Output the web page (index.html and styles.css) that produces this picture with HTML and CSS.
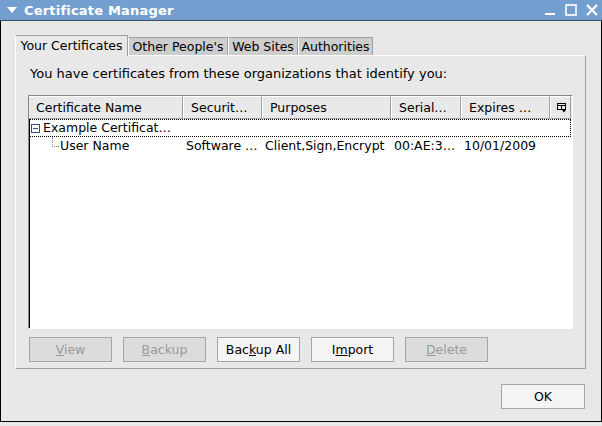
FILE: index.html
```html
<!DOCTYPE html>
<html lang="en">
<head>
    <meta charset="UTF-8">
    <title>Certificate Manager</title>
    <link rel="stylesheet" href="styles.css">
</head>
<body>
    <div class="window">
        <div class="titlebar">
            <svg class="menu-arrow" width="12" height="8" viewBox="0 0 12 8"><polygon points="1,1 11,1 6,7" fill="#fff"/></svg>
            <span class="title">Certificate Manager</span>
            <div class="controls">
                <svg width="12" height="12" viewBox="0 0 12 12"><rect x="1" y="9" width="10" height="2" fill="#fff"/></svg>
                <svg width="12" height="12" viewBox="0 0 12 12"><rect x="1" y="1" width="10" height="10" fill="none" stroke="#fff" stroke-width="1.6"/></svg>
                <svg width="12" height="12" viewBox="0 0 12 12"><path d="M1 1 L11 11 M11 1 L1 11" stroke="#fff" stroke-width="2.2"/></svg>
            </div>
        </div>

        <div class="content">
            <div class="tabs">
                <div class="tab active t-yours">Your Certificates</div>
                <div class="tab t-people">Other People's</div>
                <div class="tab t-sites">Web Sites</div>
                <div class="tab t-auth">Authorities</div>
            </div>
            <div class="panel">
                <p class="intro">You have certificates from these organizations that identify you:</p>
                <div class="tree">
                    <div class="tree-head">
                        <div class="col c-name">Certificate Name</div>
                        <div class="col c-sec">Securit…</div>
                        <div class="col c-purp">Purposes</div>
                        <div class="col c-serial">Serial…</div>
                        <div class="col c-exp">Expires …</div>
                        <div class="col c-pick">
                            <svg width="10" height="10" viewBox="0 0 10 10"><rect x="0.5" y="0.5" width="8" height="6" fill="none" stroke="#000"/><line x1="0.5" y1="2.5" x2="8.5" y2="2.5" stroke="#000"/><line x1="4.5" y1="2.5" x2="4.5" y2="6.5" stroke="#000"/><polygon points="5,7 9,7 7,9.5" fill="#000"/></svg>
                        </div>
                    </div>
                    <div class="row group focused">
                        <span class="expander"></span>Example Certificat…
                    </div>
                    <div class="row">
                        <div class="cell c-name"><span class="branch"></span>User Name</div>
                        <div class="cell c-sec">Software …</div>
                        <div class="cell c-purp">Client,Sign,Encrypt</div>
                        <div class="cell c-serial">00:AE:3…</div>
                        <div class="cell c-exp">10/01/2009</div>
                    </div>
                </div>
                <div class="actions">
                    <button class="btn" disabled><u>V</u>iew</button>
                    <button class="btn" disabled><u>B</u>ackup</button>
                    <button class="btn">Bac<u>k</u>up All</button>
                    <button class="btn">I<u>m</u>port</button>
                    <button class="btn" disabled><u>D</u>elete</button>
                </div>
            </div>
            <div class="footer">
                <button class="btn">OK</button>
            </div>
        </div>
    </div>
</body>
</html>
```

FILE: styles.css
```css
body {
    margin: 0;
    padding: 0;
    font-family: "DejaVu Sans", sans-serif;
    font-size: 12.5px;
    background-color: #e8e8e8;
    color: #000;
}
.window {
    width: 602px;
    height: 422px;
    box-sizing: border-box;
    border-left: 1px solid #000;
    border-right: 1px solid #000;
    border-bottom: 1px solid #000;
    display: flex;
    flex-direction: column;
}
.titlebar {
    height: 20px;
    margin: 0 -1px;
    background-color: #729fcf;
    border-bottom: 1px solid #3b4f66;
    display: flex;
    align-items: center;
    color: #fff;
    flex-shrink: 0;
}
.menu-arrow {
    margin: 0 6px 0 6px;
}
.title {
    font-weight: bold;
    font-size: 13px;
    letter-spacing: 0.2px;
}
.controls {
    margin-left: auto;
    margin-right: 4px;
    display: flex;
    gap: 9px;
}
.content {
    flex: 1;
    padding: 14px 15px 0 14px;
    display: flex;
    flex-direction: column;
}
.tabs {
    display: flex;
    align-items: flex-end;
    height: 20px;
}
.tab {
    height: 18px;
    line-height: 18px;
    padding: 0;
    text-align: center;
    white-space: nowrap;
    background-color: #cdcdcd;
    border: 1px solid #a0a0a0;
    border-bottom: none;
    border-left-color: #fff;
    box-sizing: border-box;
}
.tab.active {
    height: 21px;
    line-height: 20px;
    background-color: #e8e8e8;
    position: relative;
    top: 1px;
}
.t-yours { width: 113px; }
.t-people { width: 100px; }
.t-sites { width: 70px; }
.t-auth { width: 75px; }
.panel {
    height: 314px;
    box-sizing: border-box;
    border: 1px solid #a0a0a0;
    border-top-color: #fff;
    border-left-color: #fff;
    padding: 0 12px;
    display: flex;
    flex-direction: column;
}
.intro {
    margin: 11px 0 0 2px;
    height: 14px;
    line-height: 14px;
    font-size: 13px;
}
.tree {
    margin-top: 14px;
    height: 234px;
    box-sizing: border-box;
    background-color: #fff;
    border: 1px solid #888;
    border-right-color: #fff;
    border-bottom-color: #fff;
    box-shadow: inset 1px 1px 0 #000;
}
.tree-head {
    display: flex;
    height: 23px;
    background-color: #e8e8e8;
}
.tree-head .col {
    box-sizing: border-box;
    height: 23px;
    line-height: 21px;
    padding-left: 7px;
    border: 1px solid #a0a0a0;
    border-left-color: #fff;
    border-top-color: #fff;
    overflow: hidden;
    white-space: nowrap;
}
.tree-head .col:first-child {
    border-left: none;
}
.c-name { width: 154px; }
.c-sec { width: 79px; }
.c-purp { width: 129px; }
.c-serial { width: 70px; }
.c-exp { width: 89px; }
.tree-head .c-pick {
    width: 21px;
    padding-left: 6px;
    display: flex;
    align-items: center;
}
.row {
    height: 18px;
    line-height: 18px;
    display: flex;
    white-space: nowrap;
}
.row.group {
    padding-left: 2px;
    align-items: center;
}
.row.focused {
    outline: 1px dotted #000;
    outline-offset: -1px;
    margin-right: 1px;
}
.expander {
    width: 7px;
    height: 7px;
    border: 1px solid #3a4a8c;
    margin-right: 3px;
    background: linear-gradient(#3a4a8c, #3a4a8c) center / 5px 1px no-repeat;
}
.cell {
    padding-left: 3px;
    box-sizing: border-box;
    overflow: hidden;
}
.cell.c-name {
    padding-left: 23px;
    display: flex;
    align-items: center;
}
.branch {
    width: 7px;
    height: 10px;
    margin-bottom: 9px;
    margin-right: 1px;
    box-sizing: border-box;
    border-left: 1px dotted #888;
    border-bottom: 1px dotted #888;
}
.actions {
    margin-top: 8px;
    display: flex;
    gap: 11px;
    padding-left: 1px;
}
.btn {
    width: 83px;
    height: 25px;
    box-sizing: border-box;
    font-family: "DejaVu Sans", sans-serif;
    font-size: 12.5px;
    color: #000;
    background-color: #f4f4f4;
    border: 1px solid #a6a6a6;
    border-radius: 0;
    padding: 0;
}
.btn:disabled {
    background-color: #dcdcdc;
    color: #9a9a9a;
}
.footer {
    display: flex;
    justify-content: flex-end;
    margin-top: 15px;
    padding-right: 1px;
}
.footer .btn {
    width: 84px;
}
```
